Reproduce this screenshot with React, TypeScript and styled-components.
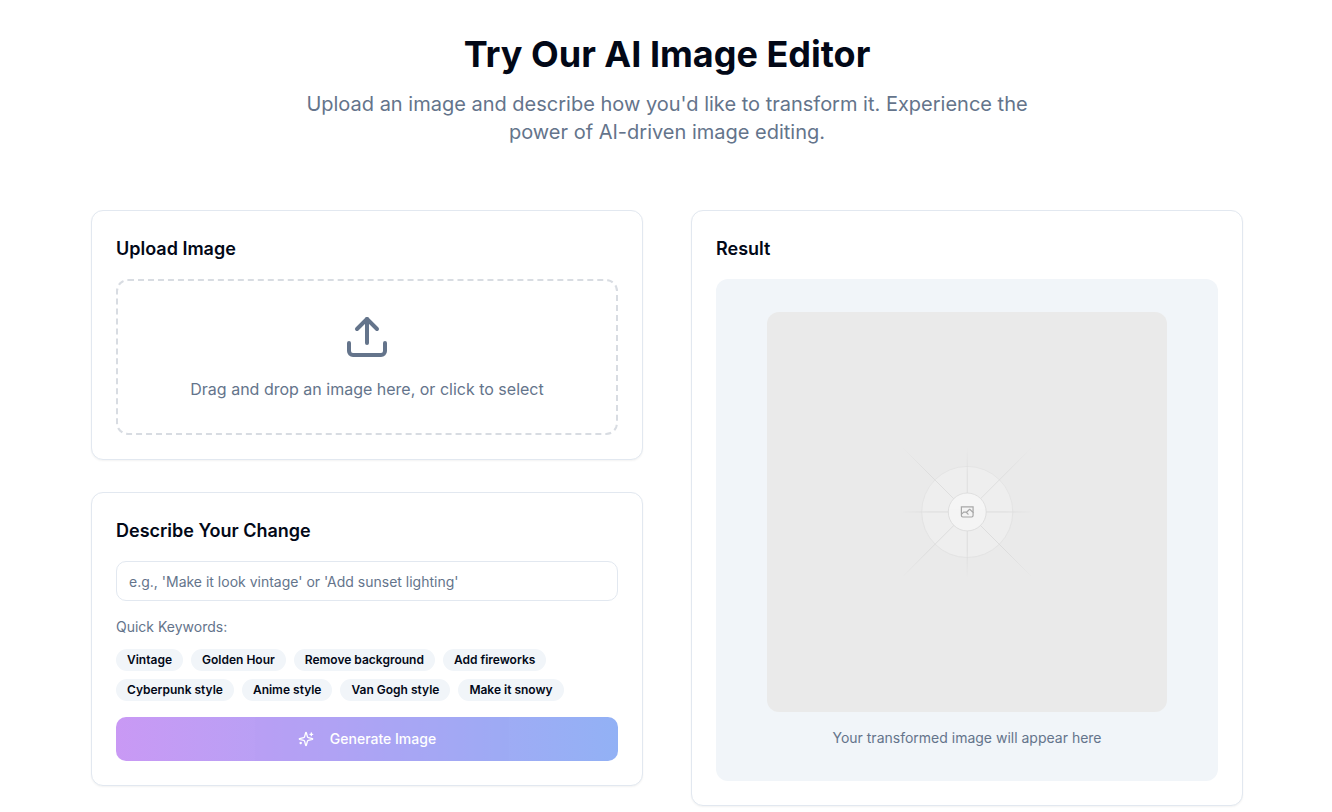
import React, { useState } from "react";
import styled, { createGlobalStyle } from "styled-components";
import { Upload } from "lucide-react";

const color = {
  text: "#020817",
  muted: "#64748b",
  border: "#e2e8f0",
  soft: "#f1f5f9",
  dash: "#d8dce2",
};

const GlobalStyle = createGlobalStyle`
  *, *::before, *::after { box-sizing: border-box; }
  body {
    margin: 0;
    background: #fff;
    color: ${color.text};
    font-family: Inter, "Liberation Sans", sans-serif;
    font-size: 16px;
    line-height: 24px;
  }
  h1, h2, p { margin: 0; }
  button, input { font-family: inherit; }
`;

const Page = styled.main`
  padding: 34px 16px 6px 18px;
`;

const Header = styled.header`
  max-width: 768px;
  margin: 0 auto 64px;
  text-align: center;
`;

const Title = styled.h1`
  margin-bottom: 16px;
  font-size: 36px;
  line-height: 40px;
  font-weight: 700;
`;

const Lead = styled.p`
  font-size: 20px;
  line-height: 28px;
  color: ${color.muted};
`;

const Columns = styled.div`
  display: grid;
  grid-template-columns: repeat(2, minmax(0, 1fr));
  gap: 48px;
  align-items: start;
  max-width: 1152px;
  margin: 0 auto;

  @media (max-width: 900px) {
    grid-template-columns: minmax(0, 1fr);
  }
`;

const Stack = styled.div`
  display: flex;
  flex-direction: column;
  gap: 32px;
`;

const Card = styled.section`
  padding: 24px;
  border: 1px solid ${color.border};
  border-radius: 12px;
  background: #fff;
  box-shadow: 0 1px 2px rgba(0, 0, 0, 0.05);
`;

const CardTitle = styled.h2`
  margin-bottom: 16px;
  font-size: 18px;
  line-height: 28px;
  font-weight: 600;
`;

const DropZone = styled.label`
  display: flex;
  flex-direction: column;
  align-items: center;
  gap: 16px;
  padding: 32px;
  border: 2px dashed ${color.dash};
  border-radius: 12px;
  color: ${color.muted};
  text-align: center;
  cursor: pointer;
`;

const FileInput = styled.input`
  display: none;
`;

const PromptInput = styled.input`
  display: block;
  width: 100%;
  height: 40px;
  margin-bottom: 16px;
  padding: 8px 12px;
  border: 1px solid ${color.border};
  border-radius: 10px;
  background: #fff;
  color: ${color.text};
  font-size: 14px;
  line-height: 20px;

  &::placeholder {
    color: ${color.muted};
    opacity: 1;
  }
`;

const SmallText = styled.p`
  font-size: 14px;
  line-height: 20px;
  color: ${color.muted};
`;

const Keywords = styled.div`
  display: flex;
  flex-wrap: wrap;
  gap: 8px;
  margin: 12px 0 16px;
`;

const Keyword = styled.button`
  padding: 2px 10px;
  border: 1px solid transparent;
  border-radius: 11px;
  background: ${color.soft};
  color: ${color.text};
  font-size: 12px;
  line-height: 16px;
  font-weight: 600;
  cursor: pointer;
`;

const GenerateButton = styled.button`
  display: flex;
  align-items: center;
  justify-content: center;
  gap: 16px;
  width: 100%;
  height: 44px;
  border: 0;
  border-radius: 10px;
  background: linear-gradient(to right, #9333ea, #2563eb);
  color: #fff;
  font-size: 14px;
  line-height: 20px;
  font-weight: 500;
  cursor: pointer;

  &:disabled {
    opacity: 0.5;
    cursor: default;
  }
`;

const ResultPanel = styled.div`
  display: flex;
  flex-direction: column;
  align-items: center;
  justify-content: center;
  gap: 16px;
  aspect-ratio: 1;
  border-radius: 12px;
  background: ${color.soft};
  text-align: center;
`;

const PlaceholderSvg = styled.svg`
  display: block;
  width: 80%;
  max-width: 400px;
  border-radius: 12px;
`;

const SparklesIcon = () => (
  <svg
    width="16"
    height="16"
    viewBox="0 0 24 24"
    fill="none"
    stroke="currentColor"
    strokeWidth="2"
    strokeLinecap="round"
    strokeLinejoin="round"
    aria-hidden="true"
  >
    <path d="M9.937 15.5A2 2 0 0 0 8.5 14.063l-6.135-1.582a.5.5 0 0 1 0-.962L8.5 9.936A2 2 0 0 0 9.937 8.5l1.582-6.135a.5.5 0 0 1 .963 0L14.063 8.5A2 2 0 0 0 15.5 9.937l6.135 1.581a.5.5 0 0 1 0 .964L15.5 14.063a2 2 0 0 0-1.437 1.437l-1.582 6.135a.5.5 0 0 1-.963 0z" />
    <path d="M20 3v4" />
    <path d="M22 5h-4" />
    <path d="M4 17v2" />
    <path d="M5 18H3" />
  </svg>
);

const rays = [
  { id: "ray-diagonal-up", x1: 404.8, y1: 796, x2: 796.2, y2: 404.6 },
  { id: "ray-horizontal", x1: 404.8, y1: 599.9, x2: 796.6, y2: 599.9 },
  { id: "ray-vertical", x1: 600.7, y1: 795.7, x2: 600.7, y2: 404 },
  { id: "ray-diagonal-down", x1: 796.2, y1: 796.2, x2: 404.8, y2: 404.8 },
];

const ImagePlaceholder = () => (
  <PlaceholderSvg viewBox="0 0 1200 1200" fill="none" role="img" aria-label="Placeholder">
    <defs>
      {rays.map((r) => (
        <linearGradient key={r.id} gradientUnits="userSpaceOnUse" {...r}>
          <stop stopColor="#C9C9C9" stopOpacity="0" />
          <stop offset=".208" stopColor="#C9C9C9" />
          <stop offset=".792" stopColor="#C9C9C9" />
          <stop offset="1" stopColor="#C9C9C9" stopOpacity="0" />
        </linearGradient>
      ))}
    </defs>
    <rect width="1200" height="1200" fill="#EAEAEA" />
    <g opacity=".5">
      <g opacity=".5">
        <circle cx="600.709" cy="599.88" r="136.62" fill="#FAFAFA" stroke="#C9C9C9" strokeWidth="2.418" />
      </g>
      {rays.map(({ id, ...line }) => (
        <line key={id} {...line} stroke={`url(#${id})`} strokeWidth="2.418" />
      ))}
      <circle cx="600.709" cy="599.88" r="56.825" fill="#fff" />
      <path
        fill="#666"
        fillRule="evenodd"
        clipRule="evenodd"
        d="M616.426 586.58h-31.434v16.176l3.553-3.554.531-.531h9.068l.074-.074 8.463-8.463h2.565l7.18 7.181V586.58Zm-15.715 14.654 3.698 3.699 1.283 1.282-2.565 2.565-1.282-1.283-5.2-5.199h-6.066l-5.514 5.514-.073.073v2.876a2.418 2.418 0 0 0 2.418 2.418h26.598a2.418 2.418 0 0 0 2.418-2.418v-8.317l-8.463-8.463-7.181 7.181-.071.072Zm-19.347 5.442v4.085a6.045 6.045 0 0 0 6.046 6.045h26.598a6.044 6.044 0 0 0 6.045-6.045v-7.108l1.356-1.355-1.282-1.283-.074-.073v-17.989h-38.689v23.43l-.146.146.146.147Z"
      />
      <circle cx="600.709" cy="599.88" r="56.825" stroke="#C9C9C9" strokeWidth="2.418" />
    </g>
  </PlaceholderSvg>
);

const keywords = [
  "Vintage",
  "Golden Hour",
  "Remove background",
  "Add fireworks",
  "Cyberpunk style",
  "Anime style",
  "Van Gogh style",
  "Make it snowy",
];

export default function App() {
  const [prompt, setPrompt] = useState("");
  const [file, setFile] = useState<File | null>(null);

  return (
    <>
      <GlobalStyle />
      <Page>
        <Header>
          <Title>Try Our AI Image Editor</Title>
          <Lead>
            Upload an image and describe how you'd like to transform it. Experience the power of
            AI-driven image editing.
          </Lead>
        </Header>
        <Columns>
          <Stack>
            <Card>
              <CardTitle>Upload Image</CardTitle>
              <DropZone htmlFor="image-file">
                <Upload size={48} aria-hidden="true" />
                {file ? file.name : "Drag and drop an image here, or click to select"}
                <FileInput
                  id="image-file"
                  type="file"
                  accept="image/*"
                  onChange={(e) => setFile(e.target.files?.[0] ?? null)}
                />
              </DropZone>
            </Card>
            <Card>
              <CardTitle id="prompt-title">Describe Your Change</CardTitle>
              <PromptInput
                type="text"
                aria-labelledby="prompt-title"
                placeholder="e.g., 'Make it look vintage' or 'Add sunset lighting'"
                value={prompt}
                onChange={(e) => setPrompt(e.target.value)}
              />
              <SmallText>Quick Keywords:</SmallText>
              <Keywords>
                {keywords.map((k) => (
                  <Keyword key={k} type="button" onClick={() => setPrompt(k)}>
                    {k}
                  </Keyword>
                ))}
              </Keywords>
              <GenerateButton type="button" disabled={!file || !prompt}>
                <SparklesIcon />
                Generate Image
              </GenerateButton>
            </Card>
          </Stack>
          <Card>
            <CardTitle>Result</CardTitle>
            <ResultPanel>
              <ImagePlaceholder />
              <SmallText>Your transformed image will appear here</SmallText>
            </ResultPanel>
          </Card>
        </Columns>
      </Page>
    </>
  );
}
